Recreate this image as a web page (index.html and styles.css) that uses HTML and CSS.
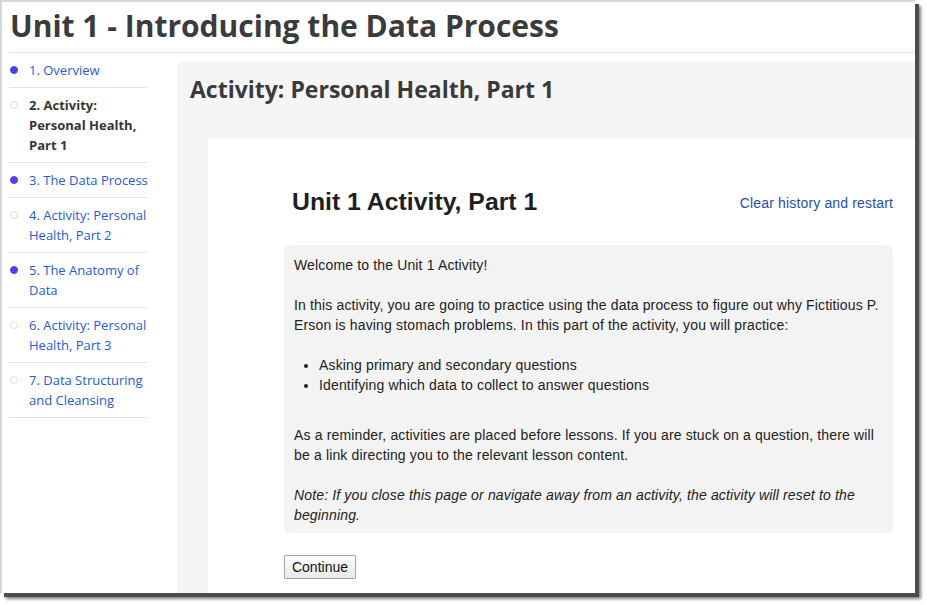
FILE: index.html
```html
<!DOCTYPE html>
<html lang="en">
<head>
<meta charset="utf-8">
<title>Unit 1 - Introducing the Data Process</title>
<link rel="stylesheet" href="styles.css">
</head>
<body>
<div class="window">
  <h1 class="unit-title">Unit 1 - Introducing the Data Process</h1>
  <div class="layout">
    <nav class="sidebar">
      <ul class="toc">
        <li class="toc-item"><span class="dot done"></span><a class="toc-link" href="#">1. Overview</a></li>
        <li class="toc-item"><span class="dot"></span><span class="toc-link current">2. Activity:<br>Personal Health,<br>Part 1</span></li>
        <li class="toc-item"><span class="dot done"></span><a class="toc-link" href="#">3. The Data Process</a></li>
        <li class="toc-item"><span class="dot"></span><a class="toc-link" href="#">4. Activity: Personal<br>Health, Part 2</a></li>
        <li class="toc-item"><span class="dot done"></span><a class="toc-link" href="#">5. The Anatomy of<br>Data</a></li>
        <li class="toc-item"><span class="dot"></span><a class="toc-link" href="#">6. Activity: Personal<br>Health, Part 3</a></li>
        <li class="toc-item"><span class="dot"></span><a class="toc-link" href="#">7. Data Structuring<br>and Cleansing</a></li>
      </ul>
    </nav>
    <main class="panel">
      <h2 class="panel-title">Activity: Personal Health, Part 1</h2>
      <section class="activity">
        <div class="activity-inner">
          <div class="activity-head">
            <h3 class="activity-title">Unit 1 Activity, Part 1</h3>
            <a class="restart" href="#">Clear history and restart</a>
          </div>
          <div class="intro">
            <p>Welcome to the Unit 1 Activity!</p>
            <p>In this activity, you are going to practice using the data process to figure out why Fictitious P. Erson is having stomach problems. In this part of the activity, you will practice:</p>
            <ul class="goals">
              <li>Asking primary and secondary questions</li>
              <li>Identifying which data to collect to answer questions</li>
            </ul>
            <p>As a reminder, activities are placed before lessons. If you are stuck on a question, there will be a link directing you to the relevant lesson content.</p>
            <p class="note">Note: If you close this page or navigate away from an activity, the activity will reset to the beginning.</p>
          </div>
          <button class="continue" type="button">Continue</button>
        </div>
      </section>
    </main>
  </div>
</div>
</body>
</html>
```
FILE: styles.css
```css
* { box-sizing: border-box; }

html, body {
  margin: 0;
  padding: 0;
  background: #ffffff;
}

body {
  height: 605px;
  overflow: hidden;
}

.window {
  width: 915px;
  height: 593px;
  border-top: 2px solid #d6d6d6;
  border-left: 2px solid #d6d6d6;
  background: #ffffff;
  overflow: hidden;
  display: flex;
  flex-direction: column;
  box-shadow: 4px 4px 0 #4c4c4c, 6px 6px 3px rgba(0, 0, 0, 0.5);
}

.unit-title {
  margin: 4px 0 0 7px;
  padding: 0 0 6px 1px;
  font-family: "Open Sans", sans-serif;
  font-weight: 700;
  font-size: 30px;
  line-height: 40px;
  color: #3b3b3b;
  border-bottom: 1px dotted #d4d4d4;
}

.layout {
  flex: 1;
  display: flex;
  min-height: 0;
}

.sidebar {
  width: 138px;
  margin-left: 7px;
  flex: none;
}

.toc {
  list-style: none;
  margin: 0;
  padding: 0;
}

.toc-item {
  display: flex;
  align-items: flex-start;
  padding: 7px 0;
  border-bottom: 1px solid #e2e2e2;
  font-family: "Open Sans", sans-serif;
  font-size: 13px;
  line-height: 20px;
}

.dot {
  flex: none;
  width: 8px;
  height: 8px;
  margin: 6px 11px 0 1px;
  border-radius: 50%;
  border: 1px solid #e0e0e0;
  background: #ffffff;
}

.dot.done {
  border-color: #4a42ee;
  background: #4a42ee;
}

.toc-link {
  color: #1f5bd6;
  text-decoration: none;
  white-space: nowrap;
}

.toc-link.current {
  color: #353535;
  font-weight: 700;
}

.panel {
  flex: 1;
  margin: 9px 0 0 30px;
  background: #f5f5f5;
  border-top-left-radius: 5px;
  display: flex;
  flex-direction: column;
  min-width: 0;
}

.panel-title {
  margin: 0;
  padding: 12px 0 0 13px;
  font-family: "Open Sans", sans-serif;
  font-weight: 700;
  font-size: 23px;
  line-height: 30px;
  color: #3a3a3a;
}

.activity {
  flex: 1;
  margin: 34px 0 0 31px;
  background: #ffffff;
}

.activity-inner {
  padding: 49px 22px 0 76px;
  font-family: "Liberation Sans", Arial, sans-serif;
  color: #222222;
}

.activity-head {
  display: flex;
  justify-content: space-between;
  align-items: center;
}

.activity-title {
  margin: 0;
  padding-left: 8px;
  font-size: 24.8px;
  line-height: 30px;
  font-weight: 700;
  color: #1f1f1f;
}

.restart {
  font-size: 14px;
  line-height: 20px;
  letter-spacing: 0.15px;
  color: #1f4fb2;
  text-decoration: none;
  margin-top: 2px;
}

.intro {
  margin-top: 28px;
  padding: 10px 10px 8px 10px;
  background: #f3f3f3;
  border-radius: 6px;
  font-size: 14px;
  line-height: 20px;
  letter-spacing: 0.15px;
}

.intro p {
  margin: 0 0 20px 0;
}

.intro p:last-child {
  margin-bottom: 0;
}

.goals {
  margin: 0 0 30px 0;
  padding-left: 25px;
}

.note {
  font-style: italic;
}

.continue {
  display: block;
  margin-top: 22px;
  width: 72px;
  height: 24px;
  padding: 0;
  font-family: "Liberation Sans", Arial, sans-serif;
  font-size: 14px;
  line-height: 22px;
  color: #111111;
  background: linear-gradient(#fbfbfb, #e9e9e9);
  border: 1px solid #a3a3a3;
  border-radius: 1px;
}
```
